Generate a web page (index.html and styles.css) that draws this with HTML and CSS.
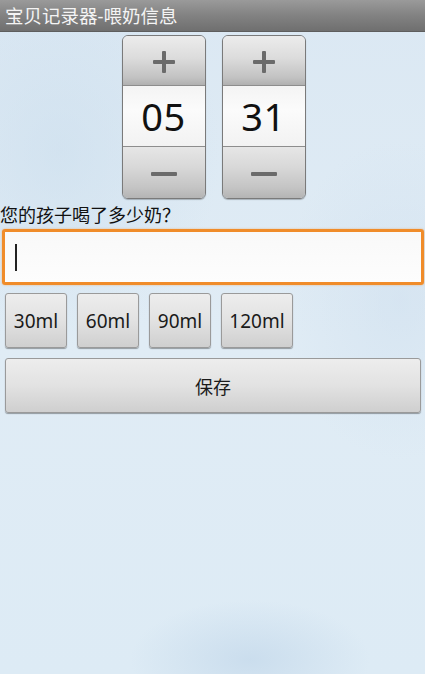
FILE: index.html
```html
<!DOCTYPE html>
<html lang="zh">
<head>
<meta charset="utf-8">
<title>宝贝记录器-喂奶信息</title>
<link rel="stylesheet" href="styles.css">
</head>
<body>
<div class="screen">
  <header class="titlebar">宝贝记录器-喂奶信息</header>
  <div class="pickers">
    <div class="picker">
      <div class="pk-btn pk-top">
        <svg width="24" height="24" viewBox="0 0 24 24"><rect x="10" y="1" width="4" height="22" rx="1" fill="#6b6b6b"/><rect x="1" y="10" width="22" height="4" rx="1" fill="#6b6b6b"/></svg>
      </div>
      <div class="pk-val">05</div>
      <div class="pk-btn pk-bot">
        <svg width="26" height="6" viewBox="0 0 26 6"><rect x="0" y="1" width="26" height="4" rx="1" fill="#6b6b6b"/></svg>
      </div>
    </div>
    <div class="picker">
      <div class="pk-btn pk-top">
        <svg width="24" height="24" viewBox="0 0 24 24"><rect x="10" y="1" width="4" height="22" rx="1" fill="#6b6b6b"/><rect x="1" y="10" width="22" height="4" rx="1" fill="#6b6b6b"/></svg>
      </div>
      <div class="pk-val">31</div>
      <div class="pk-btn pk-bot">
        <svg width="26" height="6" viewBox="0 0 26 6"><rect x="0" y="1" width="26" height="4" rx="1" fill="#6b6b6b"/></svg>
      </div>
    </div>
  </div>
  <div class="label">您的孩子喝了多少奶？</div>
  <div class="input"><span class="caret"></span></div>
  <div class="quick">
    <button class="btn qbtn">30ml</button>
    <button class="btn qbtn">60ml</button>
    <button class="btn qbtn">90ml</button>
    <button class="btn qbtn wide">120ml</button>
  </div>
  <button class="btn save">保存</button>
</div>
</body>
</html>
```
FILE: styles.css
```css
* { box-sizing: border-box; }
html, body { margin: 0; padding: 0; }
body {
  font-family: "Noto Sans", "Noto Sans CJK SC", sans-serif;
  width: 425px;
  height: 674px;
  overflow: hidden;
}
.screen {
  width: 425px;
  height: 674px;
  background:
    radial-gradient(ellipse 120px 60px at 250px 660px, rgba(190,212,232,0.6), rgba(190,212,232,0)),
    radial-gradient(ellipse 160px 200px at 60px 150px, rgba(200,220,236,0.5), rgba(200,220,236,0)),
    radial-gradient(ellipse 120px 160px at 400px 300px, rgba(205,222,238,0.5), rgba(205,222,238,0)),
    linear-gradient(180deg, #dbe8f3 0%, #e0ecf5 50%, #ddebf5 100%);
  display: flex;
  flex-direction: column;
}
.titlebar {
  height: 32px;
  background: linear-gradient(180deg, #9a9a9a 0%, #828282 50%, #6f6f6f 100%);
  color: #f4f4f4;
  font-size: 18.5px;
  line-height: 32px;
  padding-left: 5px;
  white-space: nowrap;
  border-bottom: 1px solid #5e5e5e;
}
.pickers {
  display: flex;
  justify-content: center;
  gap: 16px;
  margin-top: 3px;
  padding-left: 2px;
}
.picker {
  width: 84px;
  height: 164px;
  border: 1px solid #7a7a7a;
  border-radius: 6px;
  overflow: hidden;
  display: flex;
  flex-direction: column;
  box-shadow: 0 1px 1px rgba(0,0,0,0.25);
}
.pk-btn {
  display: flex;
  align-items: center;
  justify-content: center;
}
.pk-top {
  height: 50px;
  background: linear-gradient(180deg, #ececec 0%, #dcdcdc 45%, #c2c2c2 85%, #b0b0b0 100%);
  border-bottom: 1px solid #8d8d8d;
  padding-top: 2px;
}
.pk-val {
  height: 61px;
  background: linear-gradient(180deg, #f4f4f4 0%, #fbfbfb 40%, #f2f2f2 100%);
  border-bottom: 1px solid #8d8d8d;
  font-size: 38px;
  line-height: 61px;
  text-align: center;
  color: #111;
  letter-spacing: 0.5px;
}
.pk-bot {
  flex: 1;
  background: linear-gradient(180deg, #e6e6e6 0%, #d8d8d8 40%, #c4c4c4 80%, #b4b4b4 100%);
  padding-top: 2px;
}
.label {
  margin-top: 4px;
  font-size: 18px;
  line-height: 24px;
  color: #111;
  padding-left: 0;
  white-space: nowrap;
}
.input {
  margin: 2px 1px 0 2px;
  height: 56px;
  border: 3px solid #f08c2a;
  border-radius: 3px;
  background: linear-gradient(180deg, #f9f9f9, #fdfdfd);
  box-shadow: 0 0 2px rgba(240,140,42,0.6);
  display: flex;
  align-items: center;
  padding-left: 10px;
}
.caret {
  width: 2px;
  height: 27px;
  background: #222;
}
.btn {
  font-family: "Noto Sans", "Noto Sans CJK SC", sans-serif;
  color: #1a1a1a;
  border: 1px solid #9a9a9a;
  border-radius: 3px;
  background: linear-gradient(180deg, #ededed 0%, #e2e2e2 50%, #cfcfcf 100%);
  box-shadow: 0 1px 1px rgba(0,0,0,0.35);
  padding: 0;
  margin: 0;
}
.quick {
  display: flex;
  gap: 10px;
  margin: 8px 0 0 5px;
}
.qbtn {
  width: 62px;
  height: 55px;
  font-size: 19px;
}
.qbtn.wide { width: 72px; }
.save {
  margin: 10px 4px 0 5px;
  height: 55px;
  font-size: 18px;
}
```
